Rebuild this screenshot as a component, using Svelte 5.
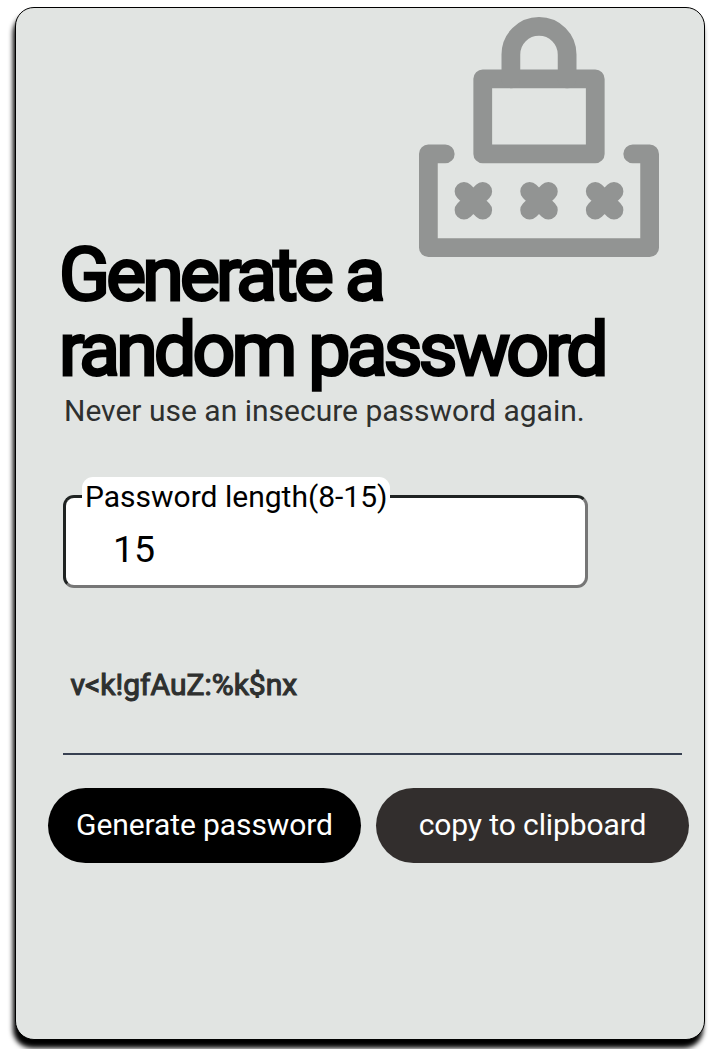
<script>
  let length = $state(15);
  let password = $state('v<k!gfAuZ:%k$nx');
  const charset = 'ABCDEFGHIJKLMNOPQRSTUVWXYZabcdefghijklmnopqrstuvwxyz0123456789!$%:<>?#';

  function generate() {
    const size = Math.min(15, Math.max(8, Number(length) || 8));
    password = Array.from({ length: size }, () => charset[Math.floor(Math.random() * charset.length)]).join('');
  }

  function copy() {
    navigator.clipboard?.writeText(password);
  }
</script>

<div class="page">
  <main class="card">
    <svg class="lock" viewBox="0 0 128 128" aria-hidden="true">
      <path d="M14 73H5V123H123V73H114" />
      <path d="M34 33H94V73H34Z" />
      <path d="M49 33V20A15 15 0 0 1 79 20V33" />
      <path d="M24 93L34 103M34 93L24 103M59 93L69 103M69 93L59 103M94 93L104 103M104 93L94 103" />
    </svg>

    <h1>Generate a<br />random password</h1>
    <p class="tagline">Never use an insecure password again.</p>

    <div class="field">
      <label for="length">Password length(8-15)</label>
      <input id="length" type="text" inputmode="numeric" bind:value={length} />
    </div>

    <output>{password}</output>

    <div class="actions">
      <button onclick={generate}>Generate password</button>
      <button class="copy" onclick={copy}>copy to clipboard</button>
    </div>
  </main>
</div>

<style>
  :global(body) {
    background: #fff;
  }
  .page {
    box-sizing: border-box;
    height: 1049px;
    padding: 7px 0 0 15px;
    overflow: hidden;
  }
  .card {
    box-sizing: border-box;
    width: 690px;
    height: 1033px;
    padding: 0 15px 0 32px;
    display: flex;
    flex-direction: column;
    align-items: flex-start;
    background: #e1e4e2;
    border: 1px solid #000;
    border-radius: 19px;
    box-shadow: -2px 7.5px 5.6px #000;
    font-family: Roboto, sans-serif;
  }
  .lock {
    width: 240px;
    height: 240px;
    margin: 9px 0 0 371px;
    flex: none;
    fill: none;
    stroke: #929493;
    stroke-width: 10;
    stroke-linecap: round;
    stroke-linejoin: round;
  }
  h1 {
    margin: -20px 0 0 11px;
    font-size: 75px;
    line-height: 75px;
    font-weight: 400;
    letter-spacing: -3.75px;
    -webkit-text-stroke: 3px #000;
    color: #000;
    white-space: nowrap;
  }
  .tagline {
    margin: 7px 0 0 16px;
    font-size: 30px;
    line-height: 34px;
    color: #2e302f;
    white-space: nowrap;
  }
  .field {
    position: relative;
    margin: 67px 0 0 15px;
  }
  label {
    position: absolute;
    left: 19px;
    top: -18px;
    width: 308px;
    height: 40px;
    box-sizing: border-box;
    padding-left: 3px;
    line-height: 40px;
    font-size: 30px;
    white-space: nowrap;
    background: #fff;
    border-radius: 11px;
  }
  input {
    display: block;
    box-sizing: border-box;
    width: 525px;
    height: 93px;
    padding: 14px 0 0 47px;
    border: 3px solid;
    border-color: #1f2322 #767676 #767676 #1f2322;
    border-radius: 11px;
    background: #fff;
    color: #000;
    font: 37.5px Roboto, sans-serif;
    outline: none;
  }
  output {
    box-sizing: border-box;
    width: 619px;
    height: 90px;
    margin: 77px 0 0 15px;
    padding-left: 7.5px;
    line-height: 40px;
    font-size: 30px;
    color: #2e302f;
    -webkit-text-stroke: 1.1px #2e302f;
    border-bottom: 2px solid #374051;
  }
  .actions {
    display: flex;
    gap: 15px;
    margin-top: 33px;
  }
  button {
    width: 313px;
    height: 75px;
    padding: 0 0 2px;
    border: 0;
    border-radius: 38px;
    background: #000;
    color: #fff;
    font: 30px Roboto, sans-serif;
    letter-spacing: -0.1px;
    white-space: nowrap;
  }
  .copy {
    background: #322e2d;
  }
</style>
